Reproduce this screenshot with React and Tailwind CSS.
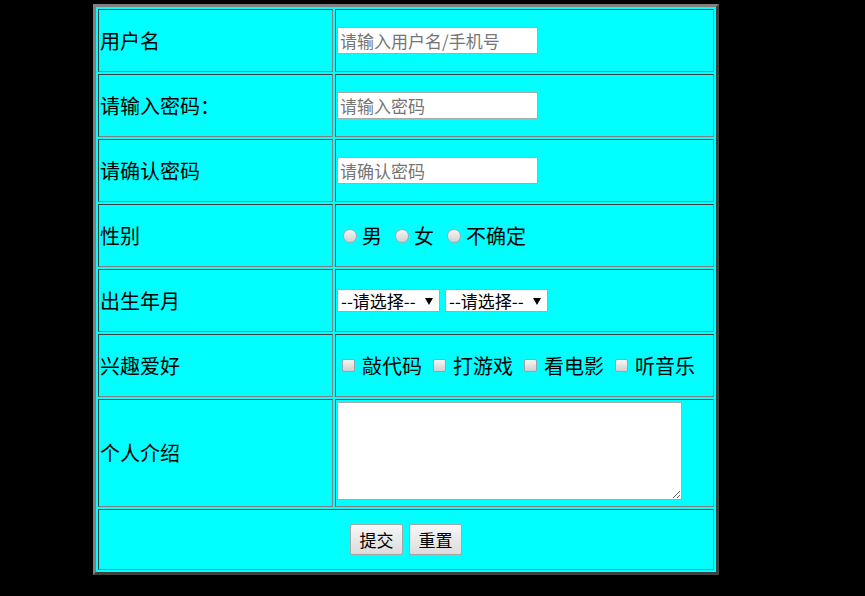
export default function App() {
  const cellL =
    "border border-t-[#404040] border-l-[#404040] border-r-[#808080] border-b-[#808080] p-[1px] align-middle text-left";
  const cellR =
    "border border-t-[#404040] border-l-[#404040] border-r-[#808080] border-b-[#808080] p-[1px] align-middle text-left";

  const Radio = ({ label }) => (
    <>
      <span className="ml-[6px] mr-[5px] w-[14px] h-[14px] shrink-0 rounded-full border border-[#a8a8a8] bg-linear-to-b from-[#f5f5f5] to-[#d2d2d2]" />
      <span>{label}</span>
    </>
  );

  const Check = ({ label, first }) => (
    <>
      <span
        className={
          first
            ? "ml-[5px] mr-[7px] w-[13px] h-[13px] shrink-0 rounded-[2px] border border-[#a0a0a0] bg-linear-to-b from-[#f5f5f5] to-[#d0d0d0]"
            : "ml-[11px] mr-[7px] w-[13px] h-[13px] shrink-0 rounded-[2px] border border-[#a0a0a0] bg-linear-to-b from-[#f5f5f5] to-[#d0d0d0]"
        }
      />
      <span>{label}</span>
    </>
  );

  const Select = () => (
    <div className="flex items-center justify-between w-[103px] h-[23px] border border-[#a9a9a9] bg-white pl-[3px] pr-[6px] text-[17px] leading-none text-black">
      <span>--请选择--</span>
      <svg width="8" height="7" viewBox="0 0 8 7" className="mb-[-2px]">
        <polygon points="0,0 8,0 4,7" fill="#000" />
      </svg>
    </div>
  );

  return (
    <div className="w-[865px] h-[596px] bg-black overflow-hidden pt-[4px] pl-[93px] font-['Noto_Sans_CJK_SC','Microsoft_YaHei',sans-serif]">
      <table className="table-fixed w-[626px] border-separate border-spacing-[2px] bg-[#00ffff] border-[3px] border-t-[#808080] border-l-[#808080] border-r-[#404040] border-b-[#404040] text-[20px] text-black">
        <colgroup>
          <col className="w-[235px]" />
          <col />
        </colgroup>
        <tbody>
          <tr>
            <td className={cellL + " h-[63px]"}>用户名</td>
            <td className={cellR}>
              <input
                placeholder="请输入用户名/手机号"
                className="block w-[201px] h-[27px] border border-[#a9a9a9] bg-white px-[2px] text-[17px] text-black placeholder:text-[#757575] outline-none"
              />
            </td>
          </tr>
          <tr>
            <td className={cellL + " h-[63px]"}>请输入密码：</td>
            <td className={cellR}>
              <input
                type="password"
                placeholder="请输入密码"
                className="block w-[201px] h-[27px] border border-[#a9a9a9] bg-white px-[2px] text-[17px] text-black placeholder:text-[#757575] outline-none"
              />
            </td>
          </tr>
          <tr>
            <td className={cellL + " h-[63px]"}>请确认密码</td>
            <td className={cellR}>
              <input
                type="password"
                placeholder="请确认密码"
                className="block w-[201px] h-[27px] border border-[#a9a9a9] bg-white px-[2px] text-[17px] text-black placeholder:text-[#757575] outline-none"
              />
            </td>
          </tr>
          <tr>
            <td className={cellL + " h-[63px]"}>性别</td>
            <td className={cellR}>
              <div className="flex items-center">
                <Radio label="男" />
                <span className="w-[7px] shrink-0" />
                <Radio label="女" />
                <span className="w-[7px] shrink-0" />
                <Radio label="不确定" />
              </div>
            </td>
          </tr>
          <tr>
            <td className={cellL + " h-[63px]"}>出生年月</td>
            <td className={cellR}>
              <div className="flex items-center gap-[5px]">
                <Select />
                <Select />
              </div>
            </td>
          </tr>
          <tr>
            <td className={cellL + " h-[63px]"}>兴趣爱好</td>
            <td className={cellR}>
              <div className="flex items-center">
                <Check label="敲代码" first />
                <Check label="打游戏" />
                <Check label="看电影" />
                <Check label="听音乐" />
              </div>
            </td>
          </tr>
          <tr>
            <td className={cellL + " h-[108px]"}>个人介绍</td>
            <td className="border border-t-[#404040] border-l-[#404040] border-r-[#808080] border-b-[#808080] p-[1px] align-top text-left">
              <textarea className="block mt-[1px] w-[345px] h-[98px] border border-[#a9a9a9] bg-white outline-none text-[16px]" />
            </td>
          </tr>
          <tr>
            <td
              colSpan={2}
              className="border border-t-[#404040] border-l-[#404040] border-r-[#808080] border-b-[#808080] p-[1px] align-middle h-[61px]"
            >
              <div className="flex items-center justify-center gap-[6px]">
                <button className="w-[53px] h-[31px] border border-[#a6a6a6] rounded-[2px] bg-linear-to-b from-[#f7f7f7] to-[#dcdcdc] text-[17px] leading-none text-black">
                  提交
                </button>
                <button className="w-[53px] h-[31px] border border-[#a6a6a6] rounded-[2px] bg-linear-to-b from-[#f7f7f7] to-[#dcdcdc] text-[17px] leading-none text-black">
                  重置
                </button>
              </div>
            </td>
          </tr>
        </tbody>
      </table>
    </div>
  );
}
